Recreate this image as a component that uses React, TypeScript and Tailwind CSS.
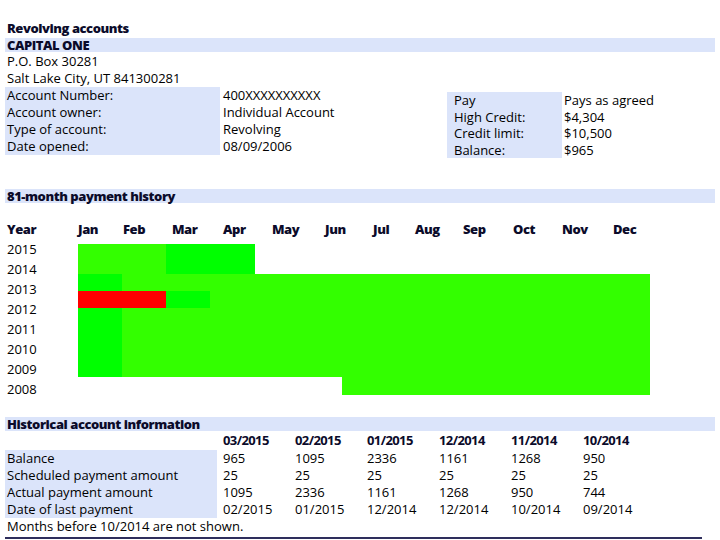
import React from 'react';

const band = 'bg-[#dbe4fa]';

const accountRows = [
  ['Account Number:', '400XXXXXXXXXX'],
  ['Account owner:', 'Individual Account'],
  ['Type of account:', 'Revolving'],
  ['Date opened:', '08/09/2006'],
];

const creditRows = [
  ['Pay', 'Pays as agreed'],
  ['High Credit:', '$4,304'],
  ['Credit limit:', '$10,500'],
  ['Balance:', '$965'],
];

// month header widths (left aligned labels, as in the report)
const months: [string, string][] = [
  ['Jan', 'w-[45px]'],
  ['Feb', 'w-[49px]'],
  ['Mar', 'w-[51px]'],
  ['Apr', 'w-[49px]'],
  ['May', 'w-[53px]'],
  ['Jun', 'w-[48px]'],
  ['Jul', 'w-[42px]'],
  ['Aug', 'w-[48px]'],
  ['Sep', 'w-[50px]'],
  ['Oct', 'w-[49px]'],
  ['Nov', 'w-[51px]'],
  ['Dec', 'w-[40px]'],
];

const years = ['2015', '2014', '2013', '2012', '2011', '2010', '2009', '2008'];

const histCols = ['03/2015', '02/2015', '01/2015', '12/2014', '11/2014', '10/2014'];
const histRows: [string, string[]][] = [
  ['Balance', ['965', '1095', '2336', '1161', '1268', '950']],
  ['Scheduled payment amount', ['25', '25', '25', '25', '25', '25']],
  ['Actual payment amount', ['1095', '2336', '1161', '1268', '950', '744']],
  ['Date of last payment', ['02/2015', '01/2015', '12/2014', '12/2014', '10/2014', '09/2014']],
];

const heading = 'font-extrabold tracking-[-0.45px] text-[#0b0b2a]';

const SectionTitle = ({ children }: { children: React.ReactNode }) => (
  <div className={`mx-[5px] h-[14px] ${band} flex items-center`}>
    <span className={`pl-[2px] leading-none ${heading}`}>{children}</span>
  </div>
);

function PaymentGrid() {
  return (
    <div className="mt-[5px] w-[572px]">
      {/* 2015 + 2014 */}
      <div className="flex h-[30px]">
        <div className="w-[88px] bg-[#33ff00]" />
        <div className="w-[89px] bg-[#00ff00]" />
      </div>
      {/* 2013 */}
      <div className="flex h-[17px]">
        <div className="w-[44px] bg-[#00ff00]" />
        <div className="flex-1 bg-[#33ff00]" />
      </div>
      {/* 2012 */}
      <div className="flex h-[17px]">
        <div className="w-[88px] bg-[#ff0000]" />
        <div className="w-[44px] bg-[#00ff00]" />
        <div className="flex-1 bg-[#33ff00]" />
      </div>
      {/* 2011 - 2009 */}
      <div className="flex h-[69px]">
        <div className="w-[44px] bg-[#00ff00]" />
        <div className="flex-1 bg-[#33ff00]" />
      </div>
      {/* 2008 */}
      <div className="flex h-[18px]">
        <div className="w-[264px]" />
        <div className="flex-1 bg-[#33ff00]" />
      </div>
    </div>
  );
}

export default function App() {
  return (
    <div className="w-[720px] h-[540px] bg-white text-black text-[13px] leading-[17px] font-['Open_Sans','Noto_Sans',sans-serif] overflow-hidden pt-[20px]">
      {/* Account header */}
      <div className={`px-[7px] ${heading}`}>Revolving accounts</div>
      <div className="mt-[1px]">
        <SectionTitle>CAPITAL ONE</SectionTitle>
      </div>
      <div className="px-[7px] mt-[1px]">P.O. Box 30281</div>
      <div className="px-[7px]">Salt Lake City, UT 841300281</div>

      <div className="flex items-start">
        <div className={`ml-[5px] w-[215px] ${band} pl-[2px]`}>
          {accountRows.map(([label]) => (
            <div key={label}>{label}</div>
          ))}
        </div>
        <div className="ml-[3px] w-[224px]">
          {accountRows.map(([label, value]) => (
            <div key={label}>{value}</div>
          ))}
        </div>
        <div className={`mt-[5px] w-[115px] ${band} pl-[7px] leading-[16.5px]`}>
          {creditRows.map(([label]) => (
            <div key={label}>{label}</div>
          ))}
        </div>
        <div className="ml-[2px] leading-[16.5px] mt-[5px]">
          {creditRows.map(([label, value]) => (
            <div key={label}>{value}</div>
          ))}
        </div>
      </div>

      {/* Payment history */}
      <div className="mt-[31px]">
        <SectionTitle>81-month payment history</SectionTitle>
      </div>
      <div className={`flex mt-[18px] ${heading}`}>
        <div className="w-[78px] pl-[7px]">Year</div>
        {months.map(([m, w]) => (
          <div key={m} className={w}>
            {m}
          </div>
        ))}
      </div>
      <div className="flex items-start mt-[1px]">
        <div className="w-[78px] pl-[7px]">
          {years.map((y) => (
            <div key={y} className="h-[20px] flex items-center">
              {y}
            </div>
          ))}
        </div>
        <PaymentGrid />
      </div>

      {/* Historical */}
      <div className="mt-[18px]">
        <SectionTitle>Historical account information</SectionTitle>
      </div>
      <div className="flex font-bold tracking-[-0.6px] text-[#0b0b2a] mt-[1px]">
        <div className="w-[223px]" />
        {histCols.map((c) => (
          <div key={c} className="w-[72px]">
            {c}
          </div>
        ))}
      </div>
      <div className="flex items-start mt-[1px]">
        <div className={`ml-[5px] w-[212px] ${band} pl-[2px]`}>
          {histRows.map(([label]) => (
            <div key={label}>{label}</div>
          ))}
        </div>
        {histCols.map((c, i) => (
          <div key={c} className={`w-[72px] ${i === 0 ? 'ml-[6px]' : ''}`}>
            {histRows.map(([label, vals]) => (
              <div key={label}>{vals[i]}</div>
            ))}
          </div>
        ))}
      </div>
      <div className="px-[7px]">Months before 10/2014 are not shown.</div>
      <div className="mt-[2px] ml-[5px] w-[697px] h-[2px] bg-[#2e2e5c]" />
    </div>
  );
}
